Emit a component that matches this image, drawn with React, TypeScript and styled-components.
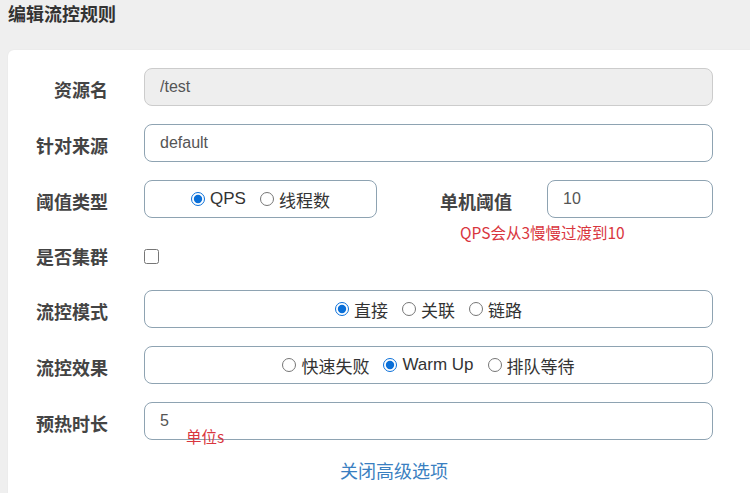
import React, { useState } from "react";
import styled, { createGlobalStyle } from "styled-components";

const GlobalStyle = createGlobalStyle`
  body {
    margin: 0;
    background: #efefef;
    font-family: "Liberation Sans", Arial, "Noto Sans CJK SC", sans-serif;
    color: #333;
    overflow: hidden;
  }
`;

const Page = styled.div`
  width: 750px;
  height: 493px;
  overflow: hidden;
`;

const Title = styled.h3`
  margin: 0;
  padding: 1px 0 0 8px;
  height: 49px;
  font-size: 18px;
  font-weight: bold;
  color: #333;
  font-family: "Noto Sans CJK SC", sans-serif;
  line-height: 24px;
`;

const Card = styled.div`
  margin-left: 8px;
  background: #fff;
  border-top-left-radius: 6px;
  padding: 18px 0 40px;
  box-shadow: 0 0 2px rgba(0, 0, 0, 0.06);
`;

const Row = styled.div<{ $h?: number; $gap?: number }>`
  display: grid;
  grid-template-columns: 100px 569px;
  column-gap: 36px;
  align-items: center;
  height: ${(p) => p.$h ?? 38}px;
  margin-bottom: ${(p) => p.$gap ?? 18}px;
  position: relative;
`;

const Label = styled.label`
  text-align: right;
  font-size: 18px;
  font-weight: bold;
  color: #444;
  font-family: "Noto Sans CJK SC", sans-serif;
  padding-top: 3px;
`;

const Input = styled.input`
  box-sizing: border-box;
  width: 100%;
  height: 38px;
  border: 1px solid #8ea3b2;
  border-radius: 8px;
  padding: 0 15px;
  font-size: 16px;
  color: #555;
  font-family: "Liberation Sans", Arial, sans-serif;
  outline: none;
  background: #fff;
  &:disabled {
    background: #eee;
    border-color: #ccc;
    color: #555;
  }
`;

const RadioBox = styled.div`
  box-sizing: border-box;
  height: 38px;
  border: 1px solid #8ea3b2;
  border-radius: 8px;
  display: flex;
  align-items: center;
  justify-content: center;
  gap: 14px;
`;

const Split = styled.div`
  display: grid;
  grid-template-columns: 233px 1fr 166px;
  column-gap: 35px;
  align-items: center;
`;

const Option = styled.label`
  display: inline-flex;
  align-items: center;
  font-size: 17px;
  color: #333;
  font-family: "Liberation Sans", Arial, "Noto Sans CJK SC", sans-serif;
  input {
    margin: 0 5px 0 0;
    width: 14px;
    height: 14px;
    accent-color: #0a6fd8;
  }
`;

const Hint = styled.span<{ $left: number; $top: number }>`
  position: absolute;
  left: ${(p) => p.$left}px;
  top: ${(p) => p.$top}px;
  color: #d9363e;
  font-size: 15.5px;
  font-family: "Noto Sans CJK SC", sans-serif;
  white-space: nowrap;
`;

const Check = styled.input`
  margin: 0;
  width: 15px;
  height: 15px;
  justify-self: start;
  margin-top: 4px;
`;

const Footer = styled.div`
  padding: 5px 0 0 332px;
`;

const Link = styled.a`
  font-size: 18px;
  color: #3a7fc1;
  font-family: "Noto Sans CJK SC", sans-serif;
  cursor: pointer;
`;

type Opt = { label: string; value: string };

const Radios = ({ name, options, value, onChange }: { name: string; options: Opt[]; value: string; onChange: (v: string) => void }) => (
  <RadioBox>
    {options.map((o) => (
      <Option key={o.value}>
        <input type="radio" name={name} checked={value === o.value} onChange={() => onChange(o.value)} />
        {o.label}
      </Option>
    ))}
  </RadioBox>
);

const App = () => {
  const [grade, setGrade] = useState("qps");
  const [strategy, setStrategy] = useState("direct");
  const [behavior, setBehavior] = useState("warmup");

  return (
    <Page>
      <GlobalStyle />
      <Title>编辑流控规则</Title>
      <Card>
        <Row>
          <Label>资源名</Label>
          <Input value="/test" disabled readOnly />
        </Row>
        <Row>
          <Label>针对来源</Label>
          <Input defaultValue="default" />
        </Row>
        <Row>
          <Label>阈值类型</Label>
          <Split>
            <Radios
              name="grade"
              value={grade}
              onChange={setGrade}
              options={[
                { label: "QPS", value: "qps" },
                { label: "线程数", value: "thread" },
              ]}
            />
            <Label>单机阈值</Label>
            <Input defaultValue="10" />
          </Split>
          <Hint $left={452} $top={41}>QPS会从3慢慢过渡到10</Hint>
        </Row>
        <Row $h={36}>
          <Label>是否集群</Label>
          <Check type="checkbox" />
        </Row>
        <Row>
          <Label>流控模式</Label>
          <Radios
            name="strategy"
            value={strategy}
            onChange={setStrategy}
            options={[
              { label: "直接", value: "direct" },
              { label: "关联", value: "relate" },
              { label: "链路", value: "chain" },
            ]}
          />
        </Row>
        <Row>
          <Label>流控效果</Label>
          <Radios
            name="behavior"
            value={behavior}
            onChange={setBehavior}
            options={[
              { label: "快速失败", value: "fail" },
              { label: "Warm Up", value: "warmup" },
              { label: "排队等待", value: "queue" },
            ]}
          />
        </Row>
        <Row $gap={12}>
          <Label>预热时长</Label>
          <Input defaultValue="5" />
          <Hint $left={178} $top={23}>单位s</Hint>
        </Row>
        <Footer>
          <Link>关闭高级选项</Link>
        </Footer>
      </Card>
    </Page>
  );
};

export default App;
